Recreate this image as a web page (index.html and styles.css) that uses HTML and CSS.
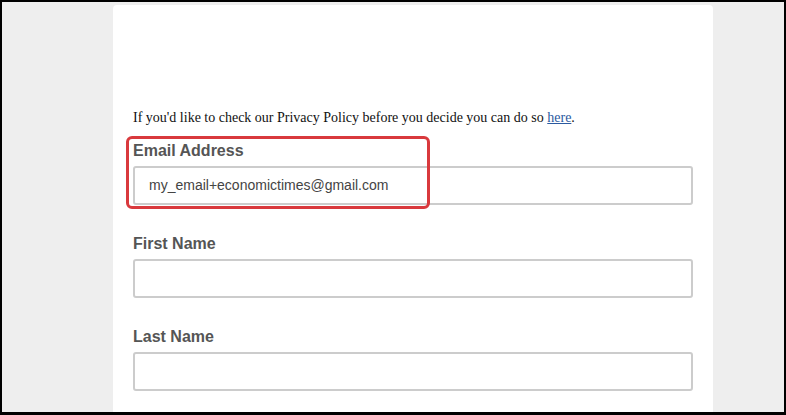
FILE: index.html
```html
<!DOCTYPE html>
<html>
<head>
<meta charset="utf-8">
<link rel="stylesheet" href="styles.css">
</head>
<body>
<div class="frame">
  <div class="card">
    <p class="intro">If you'd like to check our Privacy Policy before you decide you can do so <a href="#">here</a>.</p>
    <div class="field field-highlight">
      <label class="label">Email Address</label>
      <div class="input">my_email+economictimes@gmail.com</div>
      <div class="highlight"></div>
    </div>
    <div class="field">
      <label class="label">First Name</label>
      <div class="input"></div>
    </div>
    <div class="field">
      <label class="label">Last Name</label>
      <div class="input"></div>
    </div>
  </div>
</div>
</body>
</html>
```
FILE: styles.css
```css
* { box-sizing: border-box; }
html, body { margin: 0; padding: 0; }
body { width: 786px; height: 415px; overflow: hidden; background: #000; }
.frame {
  width: 786px;
  height: 415px;
  border-style: solid;
  border-color: #000;
  border-width: 2px 2px 3px 2px;
  background: #eeeeee;
  padding-top: 3px;
  overflow: hidden;
}
.card {
  width: 600px;
  margin-left: 111px;
  height: 420px;
  background: #fff;
  border-radius: 4px 4px 0 0;
  padding: 104px 20px 0 20px;
}
.intro {
  margin: 0 0 14px 0;
  font-family: "Liberation Serif", "Times New Roman", serif;
  font-size: 14px;
  line-height: 18px;
  color: #111;
}
.intro a { color: #2b5aa0; text-decoration: underline; }
.field { position: relative; margin-bottom: 29px; }
.label {
  display: block;
  font-family: "Liberation Sans", Arial, sans-serif;
  font-weight: bold;
  font-size: 16px;
  line-height: 20px;
  color: #555;
  margin-bottom: 5px;
}
.input {
  height: 39px;
  border: 2px solid #cccccc;
  border-radius: 3px;
  padding: 0 14px;
  font-family: "Liberation Sans", Arial, sans-serif;
  font-size: 14px;
  line-height: 35px;
  color: #444;
}
.highlight {
  position: absolute;
  left: -7px;
  top: -5px;
  width: 304px;
  height: 73px;
  border: 3px solid #d9393d;
  border-radius: 6px;
}
```
